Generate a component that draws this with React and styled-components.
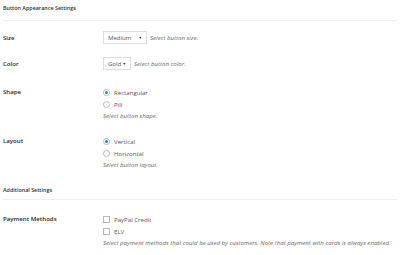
import React from "react";
import styled, { createGlobalStyle } from "styled-components";

const Global = createGlobalStyle`
  html, body { margin: 0; padding: 0; background: #fff; }
  body { font-family: "Open Sans", "Noto Sans", sans-serif; color: #23282d; }
`;

const Page = styled.div`
  width: 400px;
  height: 255px;
  padding: 0 3px;
  box-sizing: border-box;
  overflow: hidden;
`;

const SectionTitle = styled.div`
  height: ${(p) => p.$h}px;
  padding-top: ${(p) => p.$pt || 0}px;
  line-height: ${(p) => p.$lh}px;
  font-size: 5.4px;
  font-weight: 600;
  color: #2b3035;
  border-bottom: 1px solid #eeeeee;
`;

const Row = styled.div`
  display: grid;
  grid-template-columns: 100px 1fr;
  margin-top: ${(p) => p.$mt}px;
`;

const Label = styled.div`
  font-size: 6.1px;
  font-weight: 600;
  line-height: ${(p) => p.$lh || 12}px;
  color: #23282d;
`;

const Field = styled.div`
  display: flex;
  flex-direction: ${(p) => (p.$inline ? "row" : "column")};
  align-items: ${(p) => (p.$inline ? "center" : "flex-start")};
`;

const Select = styled.div`
  width: ${(p) => p.$w}px;
  height: 13px;
  box-sizing: border-box;
  border: 1px solid #dddddd;
  background: #fff;
  display: flex;
  align-items: center;
  justify-content: space-between;
  padding: 0 4px 0 4px;
  font-size: 6px;
  color: #50555a;
`;

const Arrow = styled.span`
  font-size: 3.6px;
  color: #222;
  line-height: 1;
`;

const Hint = styled.span`
  font-size: 6.1px;
  font-style: italic;
  color: #6a6a6a;
  line-height: 12px;
  margin-left: ${(p) => (p.$inline ? 3 : 0)}px;
  white-space: nowrap;
`;

const Option = styled.label`
  display: flex;
  align-items: center;
  height: 12px;
  font-size: 6.1px;
  color: #50555a;
  gap: 4px;
`;

const Radio = styled.span`
  width: 7px;
  height: 7px;
  box-sizing: border-box;
  border: 1px solid #b4b9be;
  border-radius: 50%;
  display: flex;
  align-items: center;
  justify-content: center;
  &::after {
    content: "";
    width: 3px;
    height: 3px;
    border-radius: 50%;
    background: ${(p) => (p.$checked ? "#1e8cbe" : "transparent")};
  }
`;

const Check = styled.span`
  width: 7px;
  height: 7px;
  box-sizing: border-box;
  border: 1px solid #b4b9be;
  background: #fff;
`;

function SelectField({ value, width, hint }) {
  return (
    <Field $inline>
      <Select $w={width}>
        {value}
        <Arrow>▼</Arrow>
      </Select>
      <Hint $inline>{hint}</Hint>
    </Field>
  );
}

export default function App() {
  return (
    <Page>
      <Global />
      <SectionTitle $h={20} $lh={16}>Button Appearance Settings</SectionTitle>
      <Row $mt={10}>
        <Label $lh={13}>Size</Label>
        <SelectField value="Medium" width={44} hint="Select button size." />
      </Row>
      <Row $mt={13}>
        <Label $lh={13}>Color</Label>
        <SelectField value="Gold" width={28} hint="Select button color." />
      </Row>
      <Row $mt={16}>
        <Label>Shape</Label>
        <Field>
          <Option><Radio $checked />Rectangular</Option>
          <Option><Radio />Pill</Option>
          <Hint>Select button shape.</Hint>
        </Field>
      </Row>
      <Row $mt={13}>
        <Label>Layout</Label>
        <Field>
          <Option><Radio $checked />Vertical</Option>
          <Option><Radio />Horizontal</Option>
          <Hint>Select button layout.</Hint>
        </Field>
      </Row>
      <SectionTitle $h={18} $lh={18} $pt={10}>Additional Settings</SectionTitle>
      <Row $mt={13}>
        <Label>Payment Methods</Label>
        <Field>
          <Option><Check />PayPal Credit</Option>
          <Option><Check />ELV</Option>
          <Hint>Select payment methods that could be used by customers. Note that payment with cards is always enabled.</Hint>
        </Field>
      </Row>
    </Page>
  );
}
